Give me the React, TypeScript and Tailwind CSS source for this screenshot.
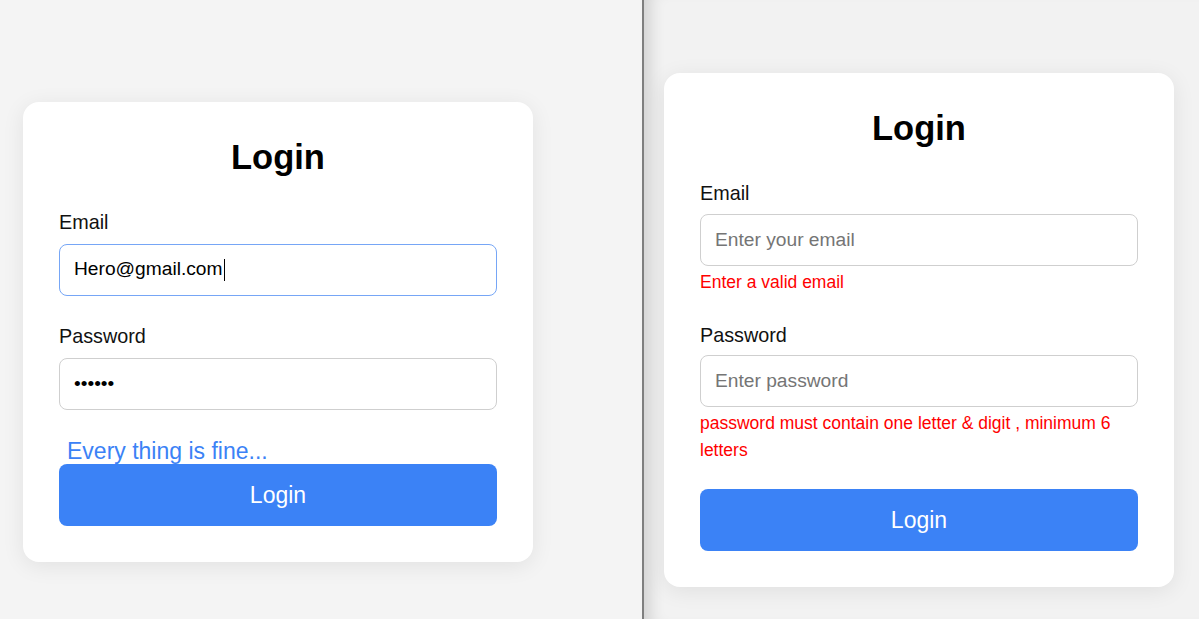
import React from "react";

const font = { fontFamily: '"Liberation Sans", Arial, sans-serif' };

function Label({ children }: { children: React.ReactNode }) {
  return <label className="block text-[19.8px] leading-[22px] text-[#111]">{children}</label>;
}

export default function App() {
  return (
    <div className="flex h-screen w-full overflow-hidden" style={font}>
      {/* Left: filled-in form */}
      <div className="w-[642px] shrink-0 bg-[#f4f4f4] pl-[23px] pt-[102px]">
        <div className="w-[510px] rounded-2xl bg-white px-[36px] pt-[36px] pb-[36px] shadow-[0_4px_22px_rgba(0,0,0,0.08)]">
          <h1 className="mb-[34px] text-center text-[34.5px] font-bold leading-[39px] text-black">Login</h1>

          <Label>Email</Label>
          <div className="mt-[10.5px] flex h-[52px] items-center rounded-lg border-[1.5px] border-[#76a6f6] px-[14px] text-[19.2px] text-black">
            <span>Hero@gmail.com</span>
            <span className="ml-px h-[22px] w-[1.5px] bg-black" />
          </div>

          <div className="mt-[29px]">
            <Label>Password</Label>
          </div>
          <input
            type="password"
            readOnly
            defaultValue="123456"
            className="mt-[11px] block h-[52px] w-full rounded-lg border border-[#cfcfcf] px-[14px] text-[19.2px] text-black outline-none"
          />

          <p className="mt-[28px] pl-[8px] text-[23px] leading-[26.5px] text-[#3b82f6]">Every thing is fine...</p>
          <button className="block h-[62px] w-full rounded-lg bg-[#3b82f6] text-[23px] text-white">Login</button>
        </div>
      </div>

      {/* Divider */}
      <div className="w-[2px] shrink-0 bg-[#7f7f7f]" />

      {/* Right: validation errors */}
      <div className="flex-1 bg-[#f2f2f2] pl-[20px] pt-[73px] shadow-[inset_18px_0_16px_-12px_rgba(0,0,0,0.14)]">
        <div className="w-[510px] rounded-2xl bg-white px-[36px] pt-[36px] pb-[36px] shadow-[0_4px_22px_rgba(0,0,0,0.08)]">
          <h1 className="mb-[34px] text-center text-[34.5px] font-bold leading-[39px] text-black">Login</h1>

          <Label>Email</Label>
          <input
            type="email"
            placeholder="Enter your email"
            className="mt-[10px] block h-[52px] w-full rounded-lg border border-[#cfcfcf] px-[14px] text-[19.2px] text-black outline-none placeholder:text-[#757575]"
          />
          <p className="mt-[3px] text-[17.5px] leading-[27px] text-[#ff0000]">Enter a valid email</p>

          <div className="mt-[27.5px]">
            <Label>Password</Label>
          </div>
          <input
            type="password"
            placeholder="Enter password"
            className="mt-[9.5px] block h-[52px] w-full rounded-lg border border-[#cfcfcf] px-[14px] text-[19.2px] text-black outline-none placeholder:text-[#757575]"
          />
          <p className="mt-[3px] pr-[20px] text-[17.5px] leading-[27px] text-[#ff0000]">
            password must contain one letter &amp; digit , minimum 6 letters
          </p>

          <button className="mt-[25px] block h-[62px] w-full rounded-lg bg-[#3b82f6] text-[23px] text-white">Login</button>
        </div>
      </div>
    </div>
  );
}
